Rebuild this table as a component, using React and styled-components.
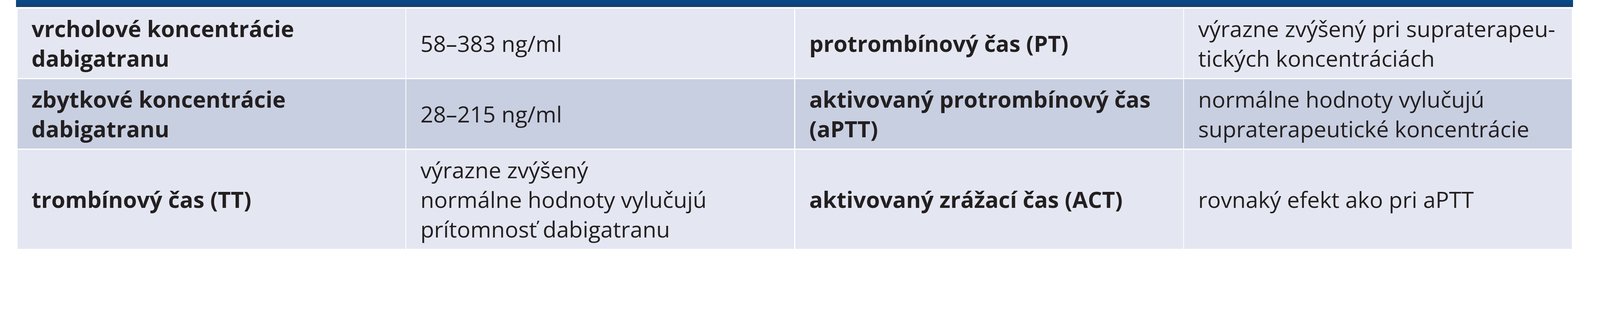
import React from 'react';
import styled, { createGlobalStyle } from 'styled-components';

// 1rem = 10px of the 4570px wide design, whatever the real viewport is
const GlobalStyle = createGlobalStyle`
    html {
        font-size: calc(100vw / 457);
    }
    html, body {
        margin: 0;
        padding: 0;
        background: #ffffff;
        overflow: hidden;
    }
`;

const Page = styled.div`
    width: 100%;
    height: 80rem;
    box-sizing: border-box;
    padding-left: 4.6rem;
    background: #ffffff;
    font-family: "Open Sans", "Noto Sans", sans-serif;
    color: #231f20;
`;

const TableWrap = styled.div`
    width: 444.7rem;
    display: flex;
    flex-direction: column;
`;

const HeaderBar = styled.div`
    height: 2rem;
    background: linear-gradient(180deg, #064b8f 0%, #0f4479 60%, #163e69 100%);
`;

const Body = styled.div`
    display: flex;
    flex-direction: column;
    gap: 0.4rem;
    padding: 0.5rem 0.3rem 0 0.4rem;
`;

const Row = styled.div`
    display: grid;
    grid-template-columns: repeat(4, minmax(0, 1fr));
    gap: 0.3rem;
`;

const Cell = styled.div`
    display: flex;
    flex-direction: column;
    justify-content: center;
    padding: 1.4rem 1rem 1.4rem 4rem;
    background: ${(p) => (p.$tone === 'dark' ? '#c8cfe1' : '#e4e7f1')};
    font-size: 6.4rem;
    line-height: 8.5rem;
    font-weight: ${(p) => (p.$bold ? 700 : 400)};
    white-space: nowrap;
`;

const Line = styled.span`
    display: block;
`;

const rows = [
    {
        tone: 'light',
        cells: [
            { bold: true, lines: ['vrcholové koncentrácie', 'dabigatranu'] },
            { lines: ['58–383 ng/ml'] },
            { bold: true, lines: ['protrombínový čas (PT)'] },
            { lines: ['výrazne zvýšený pri supraterapeu-', 'tických koncentráciách'] },
        ],
    },
    {
        tone: 'dark',
        cells: [
            { bold: true, lines: ['zbytkové koncentrácie', 'dabigatranu'] },
            { lines: ['28–215 ng/ml'] },
            { bold: true, lines: ['aktivovaný protrombínový čas', '(aPTT)'] },
            { lines: ['normálne hodnoty vylučujú', 'supraterapeutické koncentrácie'] },
        ],
    },
    {
        tone: 'light',
        cells: [
            { bold: true, lines: ['trombínový čas (TT)'] },
            { lines: ['výrazne zvýšený', 'normálne hodnoty vylučujú', 'prítomnosť dabigatranu'] },
            { bold: true, lines: ['aktivovaný zrážací čas (ACT)'] },
            { lines: ['rovnaký efekt ako pri aPTT'] },
        ],
    },
];

const App = () => {
    return (
        <>
            <GlobalStyle />
            <Page>
                <TableWrap>
                    <HeaderBar />
                    <Body>
                        {rows.map((row, i) => (
                            <Row key={i}>
                                {row.cells.map((cell, j) => (
                                    <Cell key={j} $tone={row.tone} $bold={cell.bold}>
                                        {cell.lines.map((line, k) => (
                                            <Line key={k}>{line}</Line>
                                        ))}
                                    </Cell>
                                ))}
                            </Row>
                        ))}
                    </Body>
                </TableWrap>
            </Page>
        </>
    );
};

export default App;
